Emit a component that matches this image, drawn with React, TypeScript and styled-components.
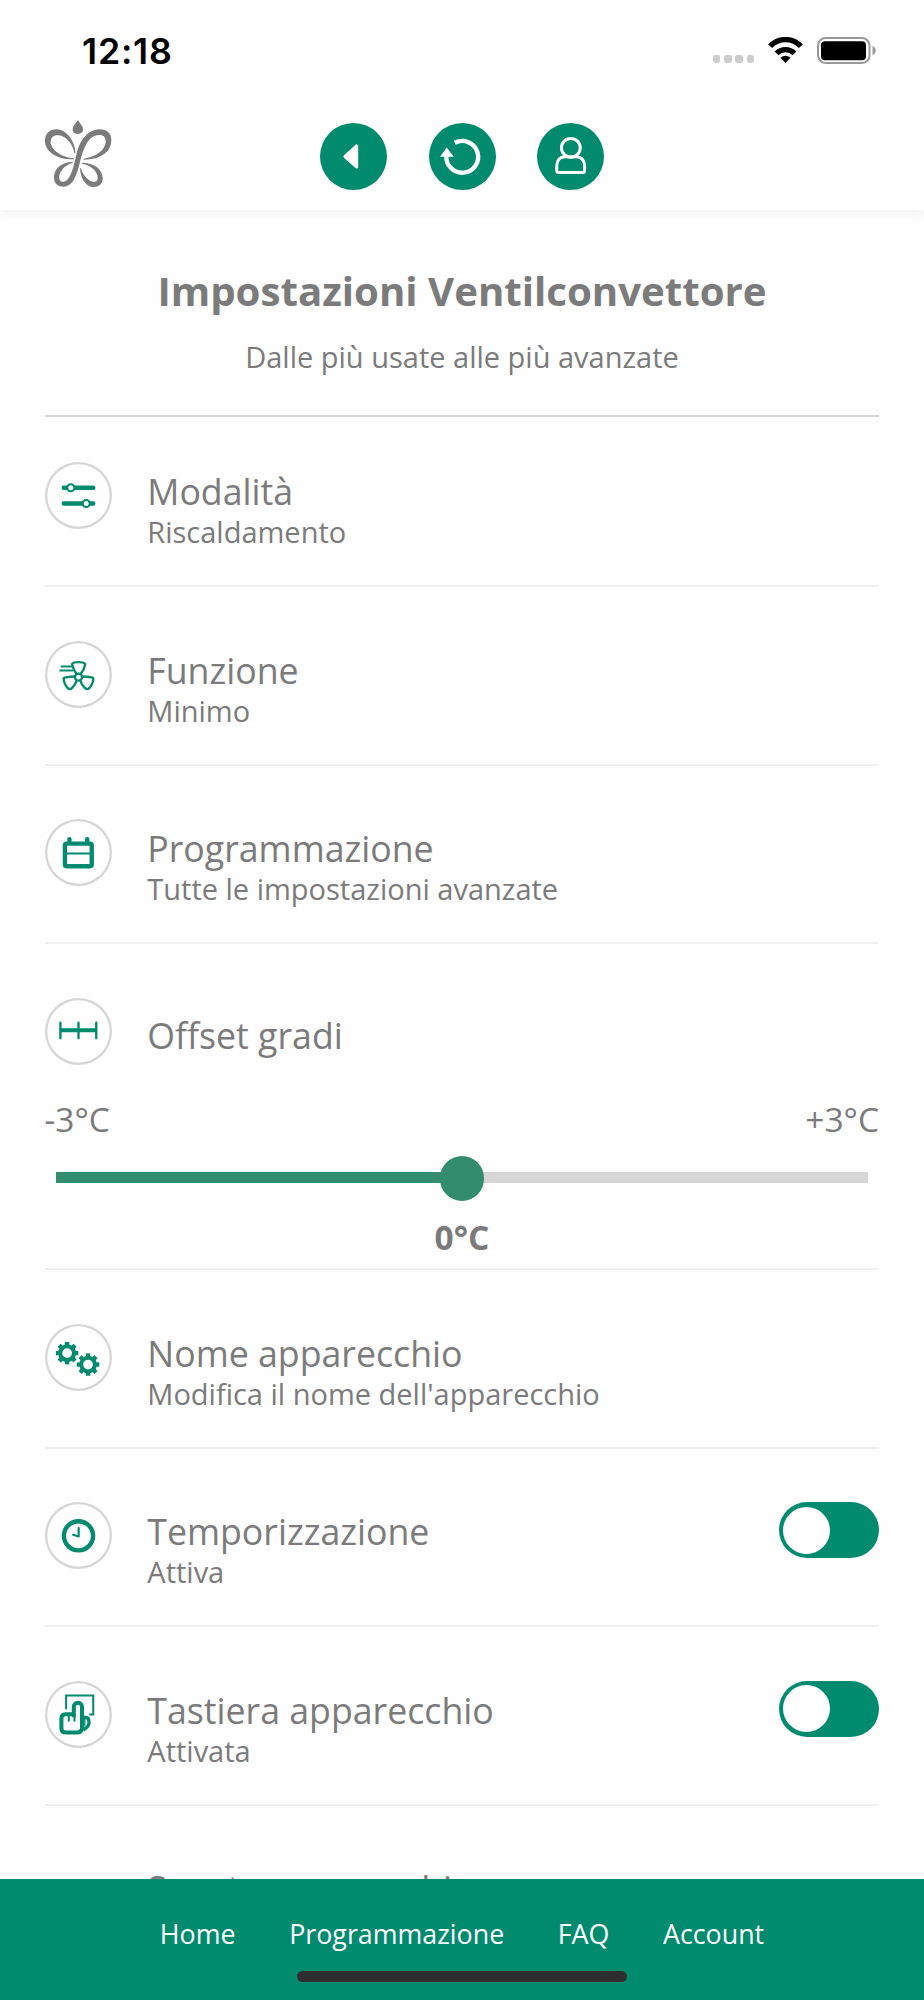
import React from "react";
import styled, { createGlobalStyle } from "styled-components";

const GREEN = "#008b6f";
const GREY = "#7b7b7b";

const GlobalStyle = createGlobalStyle`
  *, *::before, *::after { box-sizing: border-box; }
  body {
    margin: 0;
    background: #fefefe;
    color: ${GREY};
    font-family: "Open Sans", "Noto Sans", sans-serif;
  }
`;

const Screen = styled.div`
  display: flex;
  flex-direction: column;
  width: 924px;
  height: 2000px;
  overflow: hidden;
`;

const Top = styled.header`
  flex: none;
  height: 210px;
  background: #fff;
  box-shadow: 0 4px 9px rgba(0, 0, 0, 0.055);
`;

const StatusBar = styled.div`
  display: flex;
  align-items: center;
  justify-content: space-between;
  height: 100px;
  padding: 0 48px 0 82px;
`;

const Clock = styled.time`
  padding-top: 2px;
  font-family: Inter, "Liberation Sans", sans-serif;
  font-size: 35.7px;
  font-weight: 600;
  letter-spacing: 0.8px;
  line-height: 40px;
  color: #000;
`;

const StatusIcons = styled.div`
  display: flex;
  align-items: flex-end;
  height: 27px;
`;

const SignalDots = styled.div`
  display: flex;
  gap: 3.8px;
  margin: 0 14px 1px 0;
`;

const SignalDot = styled.span`
  width: 7.4px;
  height: 7.4px;
  border-radius: 2.4px;
  background: #ccc;
`;

const WifiGlyph = styled.svg`
  width: 35px;
  height: 26px;
  margin: 0 14px 0.6px 0;
`;

const Battery = styled.svg`
  width: 59px;
  height: 27px;
`;

const TopBar = styled.nav`
  display: grid;
  grid-template-columns: 1fr auto 1fr;
  align-items: center;
  height: 110px;
  padding: 2px 45px 0;
`;

const Logo = styled.svg`
  width: 67px;
  height: 67px;
  margin-bottom: 5px;
`;

const TopButtons = styled.div`
  display: flex;
  gap: 41.5px;
`;

const RoundButton = styled.button`
  width: 67px;
  height: 67px;
  padding: 0;
  border: 0;
  border-radius: 50%;
  background: ${GREEN};
`;

const Glyph = styled.svg`
  display: block;
  width: 67px;
  height: 67px;
`;

const Main = styled.main`
  flex: 1;
  min-height: 0;
  padding: 0 45px;
  overflow: hidden;
`;

const Heading = styled.section`
  height: 207px;
  padding-top: 53px;
  border-bottom: 2px solid #d6d6d6;
  text-align: center;
`;

const Title = styled.h1`
  margin: 0 0 18px;
  font-size: 40.2px;
  font-weight: 700;
  line-height: 56px;
`;

const Subtitle = styled.p`
  margin: 0;
  font-size: 29px;
  line-height: 40px;
`;

const Row = styled.section<{ $first?: boolean }>`
  height: ${(p) => (p.$first ? 170.2 : 178.5)}px;
  padding-top: ${(p) => (p.$first ? 45 : 53.6)}px;
  border-bottom: 2px solid #f0f0f0;
`;

const OffsetRow = styled(Row)`
  height: 326px;
`;

const RowHead = styled.div`
  display: flex;
  align-items: flex-start;
`;

const IconRing = styled.div<{ $blank?: boolean }>`
  flex: none;
  width: 67px;
  height: 67px;
  margin-right: 35.3px;
  border-radius: 50%;
  box-shadow: ${(p) => (p.$blank ? "none" : "inset 0 0 0 2.3px #d6d6d6")};
`;

const RowText = styled.div<{ $single?: boolean }>`
  flex: 1;
  padding-top: ${(p) => (p.$single ? 13.4 : 5)}px;
`;

const RowTitle = styled.h2`
  margin: 0;
  font-size: 35.7px;
  font-weight: 400;
  line-height: 48px;
`;

const RowNote = styled.p`
  margin: 0;
  font-size: 29px;
  line-height: 34px;
`;

const Toggle = styled.button`
  display: flex;
  align-items: center;
  width: 100.4px;
  height: 56px;
  padding: 0 4.4px;
  border: 0;
  border-radius: 28px;
  background: ${GREEN};
`;

const ToggleKnob = styled.span`
  width: 47px;
  height: 47px;
  border-radius: 50%;
  background: #fff;
`;

const RangeLabels = styled.div`
  display: flex;
  justify-content: space-between;
  margin: 31.5px 0 0 -0.5px;
  font-size: 33.5px;
  line-height: 46px;
`;

const SliderArea = styled.div`
  display: flex;
  align-items: center;
  height: 45px;
  margin: 13.8px 11px 0;
`;

const SliderFill = styled.span`
  flex: 1;
  height: 11px;
  margin: -2px -4px 0 0;
  background: #338c6e;
`;

const SliderThumb = styled.span`
  z-index: 1;
  width: 44.6px;
  height: 44.6px;
  border-radius: 50%;
  background: #338c6e;
`;

const SliderRest = styled.span`
  flex: 1;
  height: 11px;
  margin: -2px 0 0 -4px;
  background: #d6d6d6;
`;

const SliderValue = styled.div`
  margin-top: 13.2px;
  font-size: 33.5px;
  font-weight: 700;
  line-height: 46px;
  text-align: center;
`;

const Footer = styled.footer`
  flex: none;
  display: flex;
  flex-direction: column;
  align-items: center;
  height: 121px;
  padding-top: 36px;
  background: ${GREEN};
`;

const FooterLinks = styled.nav`
  display: flex;
  gap: 53.6px;
  color: #fff;
  font-size: 26.8px;
  line-height: 38px;
`;

const FooterLink = styled.span`
  white-space: nowrap;
`;

const HomeIndicator = styled.div`
  width: 330px;
  height: 11px;
  margin-top: 18px;
  border-radius: 6px;
  background: #2e2e2e;
`;

const SlidersIcon = () => (
  <Glyph viewBox="0 0 200 200" fill="none" stroke={GREEN}>
    <path d="M56 77H144M56 124H144" strokeWidth="13" strokeLinecap="round" />
    <circle cx="77" cy="77" r="10.5" strokeWidth="6" fill="#fff" />
    <circle cx="123" cy="124" r="10.5" strokeWidth="6" fill="#fff" />
  </Glyph>
);

const FanIcon = () => (
  <Glyph viewBox="0 0 200 200" fill="none" stroke={GREEN} strokeWidth="7" strokeLinejoin="round">
    <path d="M94 99Q83 80 81 69Q84 63 100 63Q117 63 120 69Q118 84 106 99" />
    <path d="M89 106Q60 107 56 111Q55 125 67 140Q74 147 81 140Q92 128 95 117" />
    <path d="M111 106Q140 107 144 111Q145 125 133 140Q126 147 119 140Q108 128 105 117" />
    <circle cx="100" cy="108" r="10.5" />
    <path d="M47 76H82M43 88H84" strokeWidth="6" />
  </Glyph>
);

const CalendarIcon = () => (
  <Glyph viewBox="0 0 200 200" fill="none" stroke={GREEN}>
    <rect x="59.5" y="73.5" width="80" height="67.5" rx="5" strokeWidth="13" />
    <path d="M60 103H139" strokeWidth="6" />
    <path d="M73 60V72M126 60V72" strokeWidth="13" strokeLinecap="round" />
  </Glyph>
);

const OffsetIcon = () => (
  <Glyph viewBox="0 0 200 200" fill="none" stroke={GREEN}>
    <path d="M46 96H154" strokeWidth="12" />
    <path d="M46 74V120M100 74V120M153 74V120" strokeWidth="7" strokeLinecap="round" />
  </Glyph>
);

const Gear = ({ x, y }: { x: number; y: number }) => (
  <g transform={`translate(${x} ${y})`}>
    <circle r="20.5" fill="none" stroke={GREEN} strokeWidth="12" />
    {[0, 45, 90, 135, 180, 225, 270, 315].map((a) => (
      <rect key={a} x="-6.5" y="-33.5" width="13" height="12" fill={GREEN} transform={`rotate(${a})`} />
    ))}
  </g>
);

const GearsIcon = () => (
  <Glyph viewBox="0 0 200 200">
    <Gear x={66} y={87} />
    <Gear x={128.5} y={121} />
  </Glyph>
);

const ClockIcon = () => (
  <Glyph viewBox="0 0 200 200" fill="none" stroke={GREEN}>
    <circle cx="100" cy="101" r="43.5" strokeWidth="13" />
    <path d="M100.500 78V103L84 98" strokeWidth="6.500" strokeLinecap="round" strokeLinejoin="round" />
  </Glyph>
);

const TouchIcon = () => (
  <Glyph viewBox="0 0 200 200" fill="none" stroke={GREEN}>
    <path d="M63 84V43H144V100H132" strokeWidth="6" />
    <path
      d="M86 108V77A12 12 0 0 1 110.500 77V142Q108 154 96 154H62Q49 154 49 141V112Q49 99 62 99H84"
      strokeWidth="12"
    />
    <path d="M71 100V119M88 100V119" strokeWidth="6" strokeLinecap="round" />
    <path d="M115 109H122Q131 110 131 120V129Q129 138 114 146" strokeWidth="10" />
    <path d="M119 112V136" strokeWidth="4" />
  </Glyph>
);

const settings = [
  { title: "Modalità", note: "Riscaldamento", Icon: SlidersIcon },
  { title: "Funzione", note: "Minimo", Icon: FanIcon },
  { title: "Programmazione", note: "Tutte le impostazioni avanzate", Icon: CalendarIcon },
];

const deviceSettings = [
  { title: "Nome apparecchio", note: "Modifica il nome dell'apparecchio", Icon: GearsIcon, toggle: false },
  { title: "Temporizzazione", note: "Attiva", Icon: ClockIcon, toggle: true },
  { title: "Tastiera apparecchio", note: "Attivata", Icon: TouchIcon, toggle: true },
];

export default function App() {
  return (
    <Screen>
      <GlobalStyle />
      <Top>
        <StatusBar>
          <Clock>12:18</Clock>
          <StatusIcons>
            <SignalDots>
              <SignalDot />
              <SignalDot />
              <SignalDot />
              <SignalDot />
            </SignalDots>
            <WifiGlyph viewBox="0 0 104 78">
              <path d="M6 28A62 62 0 0 1 98 28" fill="none" stroke="#000" strokeWidth="16" />
              <path d="M25 49A38 38 0 0 1 79 49" fill="none" stroke="#000" strokeWidth="16" />
              <path d="M37 62Q52 51 67 62L52 78Z" />
            </WifiGlyph>
            <Battery viewBox="0 0 59 27">
              <rect x="1" y="1" width="51.5" height="25" rx="7.500" fill="none" stroke="#999" strokeWidth="2" />
              <rect x="4" y="4.200" width="45" height="19" rx="4" />
              <path d="M55.500 9Q58.700 10 58.700 13.500Q58.700 17 55.500 18Z" fill="#999" />
            </Battery>
          </StatusIcons>
        </StatusBar>
        <TopBar>
          <Logo viewBox="44 45 201 201" fill={GREY}>
            <path d="M143 45C150 58 158 63 158 73C158 83 151 87 142 87C133 87 127 82 127 73C127 63 135 58 143 45Z" />
            <path d="M135 145C136 110 108 73 78 73C58 73 44 86 44 107C44 140 80 164 131 163L131 160C95 158 61 135 61 112C61 98 70 90 84 91C110 93 128 120 132 145Z" />
            <path d="M160 164C212 163 243 140 243 104C243 85 229 73 208 73C172 73 148 108 139 145C131 180 122 228 100 230C88 231 85 222 87 212C91 194 108 178 127 174L127 171C95 171 71 190 71 217C71 236 82 245 99 245C127 245 138 215 148 175C156 145 168 90 207 90C220 90 227 98 226 111C223 138 195 156 160 161Z" />
            <path d="M150 189C148 215 165 246 190 246C208 246 217 235 217 220C217 192 190 173 155 173L155 176C180 180 202 198 202 218C202 228 195 232 187 230C170 226 155 205 152 189Z" />
          </Logo>
          <TopButtons>
            <RoundButton aria-label="Indietro">
              <Glyph viewBox="0 0 200 200">
                <path d="M75 100L109 69V131Z" fill="#fff" stroke="#fff" strokeWidth="10" strokeLinejoin="round" />
              </Glyph>
            </RoundButton>
            <RoundButton aria-label="Aggiorna">
              <Glyph viewBox="0 0 200 200">
                <path d="M52 96A47.500 47.500 0 1 0 77 59" fill="none" stroke="#fff" strokeWidth="13" />
                <path d="M53 73L74 101H33Z" fill="#fff" />
              </Glyph>
            </RoundButton>
            <RoundButton aria-label="Profilo">
              <Glyph viewBox="0 0 200 200" fill="none" stroke="#fff" strokeWidth="9">
                <circle cx="101" cy="74" r="28" />
                <path d="M59 128Q60 102 84 101H117Q141 102 142 128V142Q142 148 136 148H65Q59 148 59 142Z" />
              </Glyph>
            </RoundButton>
          </TopButtons>
        </TopBar>
      </Top>
      <Main>
        <Heading>
          <Title>Impostazioni Ventilconvettore</Title>
          <Subtitle>Dalle più usate alle più avanzate</Subtitle>
        </Heading>
        {settings.map(({ title, note, Icon }, i) => (
          <Row key={title} $first={i === 0}>
            <RowHead>
              <IconRing>
                <Icon />
              </IconRing>
              <RowText>
                <RowTitle>{title}</RowTitle>
                <RowNote>{note}</RowNote>
              </RowText>
            </RowHead>
          </Row>
        ))}
        <OffsetRow>
          <RowHead>
            <IconRing>
              <OffsetIcon />
            </IconRing>
            <RowText $single>
              <RowTitle>Offset gradi</RowTitle>
            </RowText>
          </RowHead>
          <RangeLabels>
            <span>-3°C</span>
            <span>+3°C</span>
          </RangeLabels>
          <SliderArea>
            <SliderFill />
            <SliderThumb />
            <SliderRest />
          </SliderArea>
          <SliderValue>0°C</SliderValue>
        </OffsetRow>
        {deviceSettings.map(({ title, note, Icon, toggle }) => (
          <Row key={title}>
            <RowHead>
              <IconRing>
                <Icon />
              </IconRing>
              <RowText>
                <RowTitle>{title}</RowTitle>
                <RowNote>{note}</RowNote>
              </RowText>
              {toggle && (
                <Toggle aria-label={title}>
                  <ToggleKnob />
                </Toggle>
              )}
            </RowHead>
          </Row>
        ))}
        <Row>
          <RowHead>
            <IconRing $blank />
            <RowText>
              <RowTitle>Sposta apparecchio</RowTitle>
            </RowText>
          </RowHead>
        </Row>
      </Main>
      <Footer>
        <FooterLinks>
          <FooterLink>Home</FooterLink>
          <FooterLink>Programmazione</FooterLink>
          <FooterLink>FAQ</FooterLink>
          <FooterLink>Account</FooterLink>
        </FooterLinks>
        <HomeIndicator />
      </Footer>
    </Screen>
  );
}
